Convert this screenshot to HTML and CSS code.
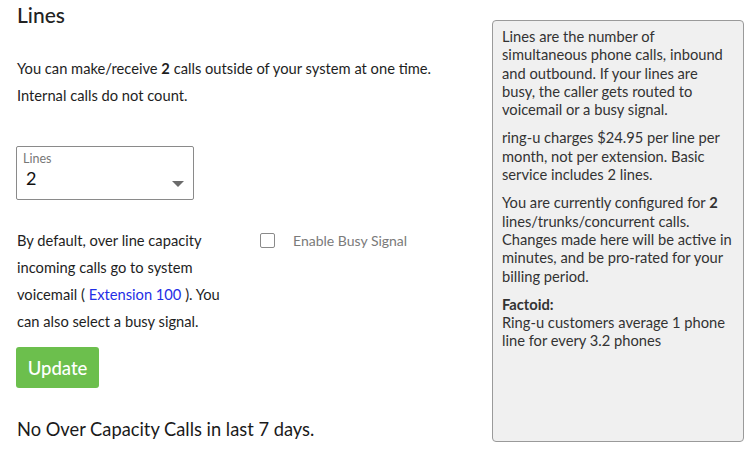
FILE: index.html
```html
<!DOCTYPE html>
<html lang="en">
<head>
<meta charset="UTF-8">
<meta name="viewport" content="width=device-width, initial-scale=1.0">
<title>Lines</title>
<link rel="stylesheet" href="styles.css">
</head>
<body>
<div class="page">
    <div class="main">
        <h1>Lines</h1>
        <p class="intro">You can make/receive <b>2</b> calls outside of your system at one time.<br>Internal calls do not count.</p>

        <div class="select-box">
            <span class="select-label">Lines</span>
            <span class="select-value">2</span>
            <span class="select-arrow"></span>
        </div>

        <div class="busy-row">
            <p class="busy-text">By default, over line capacity incoming calls go to system voicemail ( <a href="#">Extension 100</a> ). You can also select a busy signal.</p>
            <label class="busy-check">
                <span class="checkbox"></span>
                Enable Busy Signal
            </label>
        </div>

        <button class="update-button">Update</button>

        <p class="capacity">No Over Capacity Calls in last 7 days.</p>
    </div>

    <div class="aside">
        <p>Lines are the number of simultaneous phone calls, inbound and outbound. If your lines are busy, the caller gets routed to voicemail or a busy signal.</p>
        <p>ring-u charges $24.95 per line per month, not per extension. Basic service includes 2 lines.</p>
        <p>You are currently configured for <b>2</b> lines/trunks/concurrent calls. Changes made here will be active in minutes, and be pro-rated for your billing period.</p>
        <p><b>Factoid:</b><br>Ring-u customers average 1 phone line for every 3.2 phones</p>
    </div>
</div>
</body>
</html>
```

FILE: styles.css
```css
/* Basic styling */
body {
    font-family: Lato, "Liberation Sans", sans-serif;
    margin: 0;
    padding: 0;
    background-color: #fff;
    color: #1e1e1e;
}
.page {
    display: flex;
    padding: 0 12px 0 17px;
}
.main {
    flex: 1;
}
h1 {
    font-size: 21px;
    font-weight: 500;
    line-height: 24px;
    margin: 3px 0 0;
    color: #222;
}
.intro {
    font-size: 14.7px;
    line-height: 27px;
    margin: 28px 0 0;
}
.intro b {
    font-weight: 700;
}
.select-box {
    position: relative;
    box-sizing: border-box;
    width: 178px;
    height: 54px;
    margin: 37px 0 0 -1px;
    border: 1px solid #8a8a8a;
    border-radius: 2px;
    padding: 5px 0 0 6px;
}
.select-label {
    display: block;
    font-size: 12.5px;
    line-height: 14px;
    color: #777;
}
.select-value {
    display: block;
    font-size: 18px;
    line-height: 24px;
    margin-left: 3px;
    color: #111;
}
.select-arrow {
    position: absolute;
    right: 9px;
    top: 34px;
    width: 0;
    height: 0;
    border-left: 6px solid transparent;
    border-right: 6px solid transparent;
    border-top: 6px solid #6b6b6b;
}
.busy-row {
    display: flex;
    margin-top: 27px;
}
.busy-text {
    width: 214px;
    flex-shrink: 0;
    margin: 0;
    font-size: 14.7px;
    line-height: 27px;
}
.busy-text a {
    color: #1f2ee6;
    text-decoration: none;
}
.busy-check {
    display: flex;
    align-items: center;
    height: 27px;
    margin-left: 29px;
    font-size: 14px;
    color: #7a7a7a;
}
.checkbox {
    box-sizing: border-box;
    width: 15px;
    height: 15px;
    border: 1px solid #8a8a8a;
    border-radius: 2px;
    margin-right: 18px;
}
.update-button {
    display: block;
    margin: 12px 0 0 -1px;
    width: 83px;
    height: 41px;
    border: none;
    border-radius: 3px;
    background-color: #6cbf4d;
    color: #fff;
    font-family: inherit;
    font-size: 18.5px;
    font-weight: 500;
    cursor: pointer;
}
.capacity {
    font-size: 18.3px;
    line-height: 24px;
    margin: 29px 0 0;
    color: #1a1a1a;
}
.aside {
    box-sizing: border-box;
    width: 252px;
    height: 422px;
    margin-top: 20px;
    padding: 6px 9px;
    background-color: #f0f0f0;
    border: 1px solid #9a9a9a;
    border-radius: 4px;
    font-size: 14.7px;
    line-height: 18.3px;
    color: #333;
}
.aside p {
    margin: 0 0 10px;
}
.aside b {
    font-weight: 700;
}
```
